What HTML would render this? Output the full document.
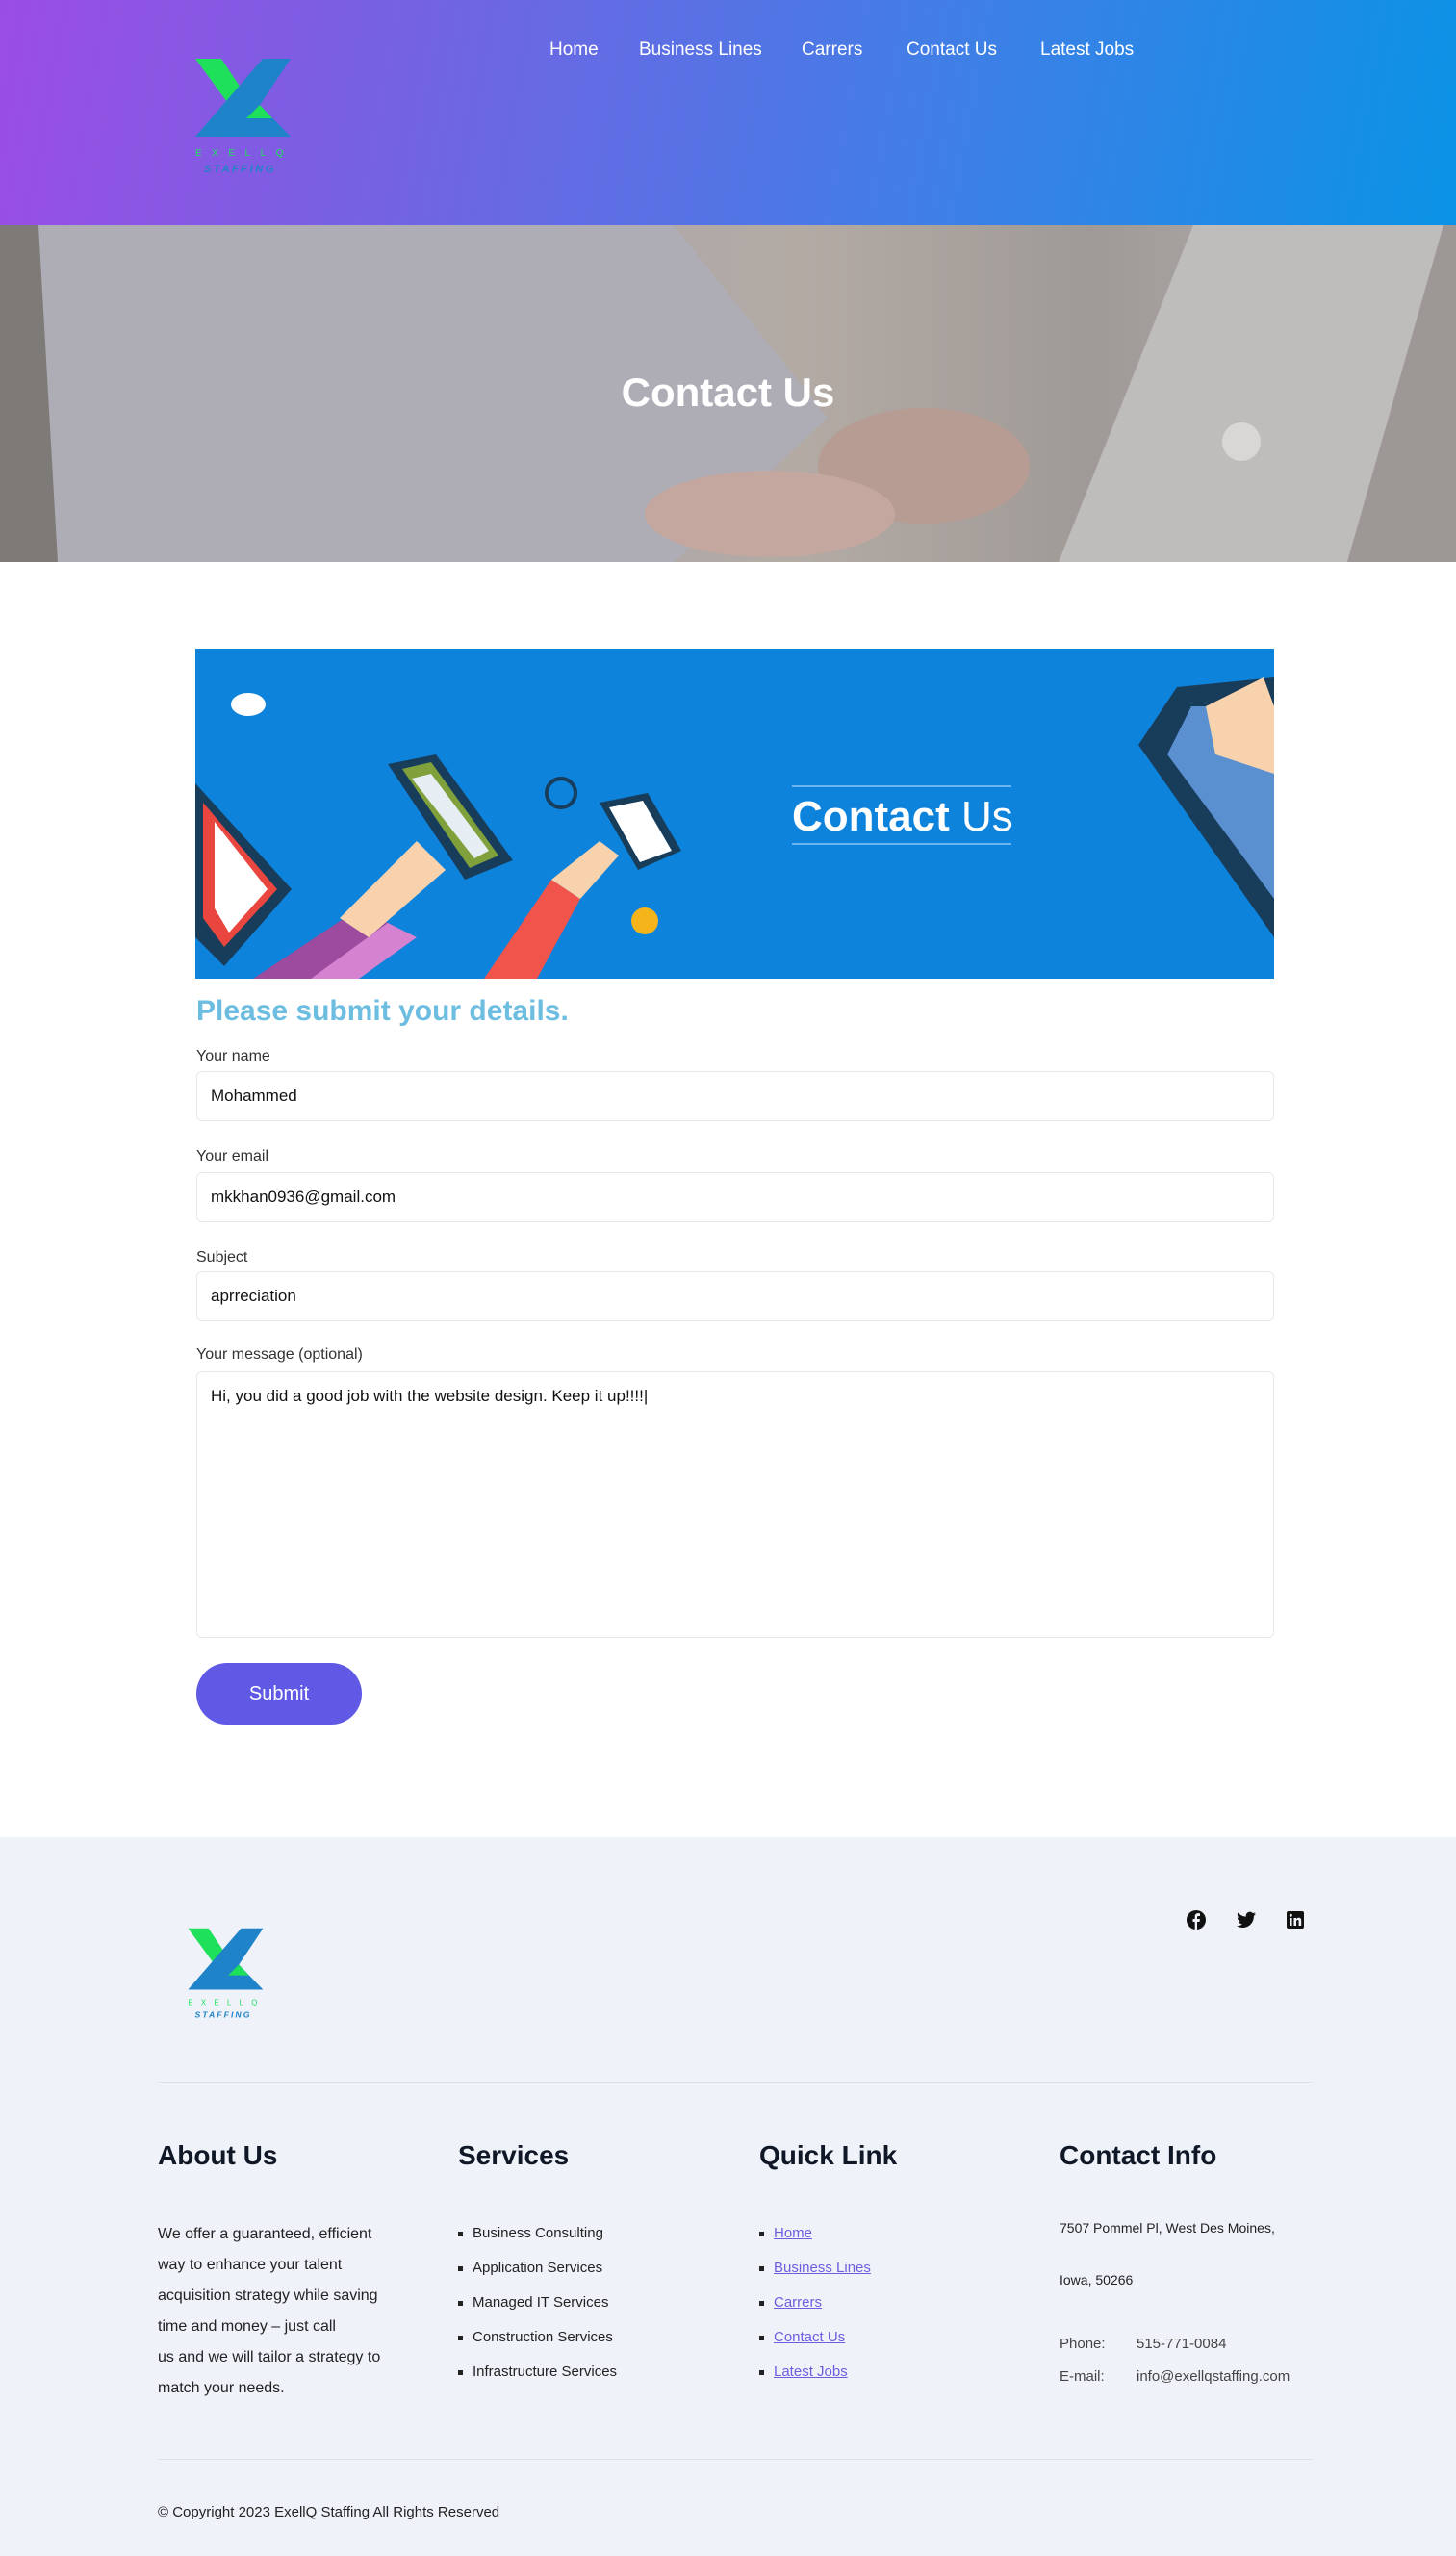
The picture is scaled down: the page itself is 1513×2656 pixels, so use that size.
<!DOCTYPE html>
<html><head><meta charset="utf-8"><style>
*{margin:0;padding:0;box-sizing:border-box}
body{width:1513px;height:2656px;font-family:"Liberation Sans",sans-serif;background:#fff;position:relative;overflow:hidden;color:#222}
.abs{position:absolute}
header{position:absolute;left:0;top:0;width:1513px;height:234px;background:linear-gradient(100deg,#9b4de3 0%,#6a68e3 35%,#3f7fe6 65%,#0a93e6 100%)}
nav a{position:absolute;top:41px;color:#fff;font-size:19px;text-decoration:none}
.hero{position:absolute;left:0;top:234px;width:1513px;height:350px;overflow:hidden;background:linear-gradient(90deg,#8f8d95 0%,#a9a6ad 30%,#b3aaa4 55%,#9f9a97 75%,#b8b3b4 100%)}
.hero h1{position:absolute;width:100%;top:150px;text-align:center;color:#fff;font-size:42px;font-weight:bold}
label{position:absolute;left:204px;font-size:16px;color:#333}
.in{position:absolute;left:204px;width:1120px;border:1px solid #e6e8ec;border-radius:6px;background:#fff;font-size:17px;color:#111;padding:0 14px}
footer{position:absolute;left:0;top:1909px;width:1513px;height:747px;background:#eff3f9}
.h{position:absolute;top:2224px;font-size:28px;font-weight:bold;color:#101828}
.ft{position:absolute;font-size:15px;color:#222}
ul.l{position:absolute;list-style:none;font-size:15px}
ul.l li{height:36px;line-height:22px;position:relative;padding-left:15px}
ul.l li:before{content:"";position:absolute;left:0;top:9px;width:5px;height:5px;background:#222}
ul.l a{color:#6b5fe0;text-decoration:underline}
hr{position:absolute;left:164px;width:1200px;border:0;border-top:1px solid #dde2ea}
</style></head><body>
<header>
<svg class="abs" style="left:200px;top:59px" width="104" height="124" viewBox="0 0 104 124">
<polygon points="3,2 30,2 58,44 44,58" fill="#1fe05a"/>
<polygon points="73,2 102,2 70,50 102,83 3,83" fill="#1f83c9"/>
<polygon points="56,64 70,50 83,64" fill="#1fe05a"/>
<text x="3" y="103" font-size="10" fill="#1fe05a" letter-spacing="10.5" font-family="Liberation Sans">EXELLQ</text>
<text x="12" y="120" font-size="11" fill="#1f83c9" letter-spacing="2.6" font-style="italic" font-weight="bold" font-family="Liberation Sans">STAFFING</text>
</svg>
<nav>
<a style="left:571px">Home</a><a style="left:664px">Business Lines</a><a style="left:833px">Carrers</a><a style="left:942px">Contact Us</a><a style="left:1081px">Latest Jobs</a>
</nav>
</header>
<div class="hero">
<svg class="abs" style="left:0;top:0" width="1513" height="350">
<polygon points="30,0 700,0 860,200 700,350 30,350" fill="#aeadb6"/>
<polygon points="0,0 40,0 60,350 0,350" fill="#7e7a78"/>
<polygon points="1240,0 1500,0 1400,350 1100,350" fill="#bfbcbc"/>
<polygon points="1500,0 1513,0 1513,350 1400,350" fill="#9d9896"/>
<ellipse cx="960" cy="250" rx="110" ry="60" fill="#b79c94"/>
<ellipse cx="800" cy="300" rx="130" ry="45" fill="#c4a89f"/>
<circle cx="1290" cy="225" r="20" fill="#d9d6d6"/>
</svg>
<h1>Contact Us</h1>
</div>
<svg class="abs" style="left:203px;top:674px" width="1121" height="343" viewBox="0 0 1121 343">
<rect width="1121" height="343" fill="#0d83dc"/>
<rect x="620" y="142" width="228" height="2" fill="#6cb4ee"/>
<rect x="620" y="202" width="228" height="2" fill="#6cb4ee"/>
<text x="620" y="189" font-size="44" fill="#fff" font-weight="bold" font-family="Liberation Sans">Contact <tspan font-weight="normal">Us</tspan></text>
<polygon points="0,140 100,250 30,330 0,300" fill="#173d5b"/>
<polygon points="8,160 85,250 30,310 8,280" fill="#e8463f"/>
<polygon points="20,180 75,250 35,295 20,270" fill="#fff"/>
<polygon points="200,120 250,110 330,220 280,240" fill="#173d5b"/>
<polygon points="215,125 245,118 315,215 285,228" fill="#7fa03b"/>
<polygon points="225,135 245,130 305,210 290,218" fill="#e7eef3"/>
<polygon points="60,343 170,270 210,290 120,343" fill="#9d4b9f"/>
<polygon points="120,343 200,285 230,300 170,343" fill="#d582d1"/>
<polygon points="150,280 230,200 260,230 180,300" fill="#f8d2ad"/>
<polygon points="420,160 470,150 505,210 460,230" fill="#173d5b"/>
<polygon points="430,165 465,158 495,210 462,222" fill="#fff"/>
<polygon points="300,343 370,240 400,260 355,343" fill="#f0544a"/>
<polygon points="370,240 420,200 440,215 400,260" fill="#f8d2ad"/>
<circle cx="467" cy="283" r="14" fill="#f4b41a"/>
<circle cx="380" cy="150" r="15" fill="none" stroke="#173d5b" stroke-width="4"/>
<ellipse cx="55" cy="58" rx="18" ry="12" fill="#fff"/>
<polygon points="1020,40 1121,30 1121,300 980,100" fill="#173d5b"/>
<polygon points="1035,60 1121,60 1121,260 1010,110" fill="#5a8fd0"/>
<polygon points="1050,60 1110,30 1121,60 1121,130 1060,110" fill="#f8d2ad"/>
</svg>
<div class="abs" style="left:204px;top:1034px;font-size:30px;font-weight:bold;color:#6cbde0">Please submit your details.</div>
<label style="top:1089px">Your name</label>
<div class="in" style="top:1113px;height:52px;line-height:50px">Mohammed</div>
<label style="top:1193px">Your email</label>
<div class="in" style="top:1218px;height:52px;line-height:50px">mkkhan0936@gmail.com</div>
<label style="top:1298px">Subject</label>
<div class="in" style="top:1321px;height:52px;line-height:50px">aprreciation</div>
<label style="top:1399px">Your message (optional)</label>
<div class="in" style="top:1425px;height:277px;padding-top:14px;line-height:22px">Hi, you did a good job with the website design. Keep it up!!!!|</div>
<div class="abs" style="left:204px;top:1728px;width:172px;height:64px;border-radius:32px;background:#6059e6;color:#fff;font-size:20px;text-align:center;line-height:64px">Submit</div>
<footer></footer>
<svg class="abs" style="left:193px;top:2002px" width="82" height="98" viewBox="0 0 104 124">
<polygon points="3,2 30,2 58,44 44,58" fill="#1fe05a"/>
<polygon points="73,2 102,2 70,50 102,83 3,83" fill="#1f83c9"/>
<polygon points="56,64 70,50 83,64" fill="#1fe05a"/>
<text x="3" y="103" font-size="10" fill="#1fe05a" letter-spacing="10.5" font-family="Liberation Sans">EXELLQ</text>
<text x="12" y="120" font-size="11" fill="#1f83c9" letter-spacing="2.6" font-style="italic" font-weight="bold" font-family="Liberation Sans">STAFFING</text>
</svg>
<svg class="abs" style="left:1233px;top:1985px" width="20" height="20" viewBox="0 0 20 20"><circle cx="10" cy="10" r="10" fill="#111"/><path d="M11 20V12h2.5l.4-3H11V7.3c0-.8.3-1.3 1.4-1.3H14V3.3C13.6 3.2 12.8 3.1 12 3.1c-2 0-3.3 1.2-3.3 3.4V9H6.5v3h2.2v8z" fill="#eff3f9"/></svg>
<svg class="abs" style="left:1285px;top:1986px" width="20" height="18" viewBox="0 0 24 20"><path d="M24 2.4c-.9.4-1.8.6-2.8.8 1-.6 1.8-1.6 2.200-2.7-1 .6-2 1-3.1 1.2C19.3.7 18 0 16.6 0c-2.7 0-4.9 2.2-4.9 4.9 0 .4 0 .8.1 1.1C7.7 5.8 4.1 3.9 1.7.9c-.4.7-.7 1.6-.7 2.5 0 1.7.9 3.2 2.2 4.1-.8 0-1.6-.2-2.2-.6v.1c0 2.4 1.7 4.4 3.9 4.8-.4.1-.8.2-1.3.2-.3 0-.6 0-.9-.1.6 2 2.4 3.4 4.6 3.4-1.7 1.3-3.8 2.1-6.1 2.1H0c2.2 1.4 4.8 2.2 7.5 2.2 9.1 0 14-7.5 14-14v-.6c1-.7 1.8-1.6 2.500-2.5z" fill="#111"/></svg>
<svg class="abs" style="left:1337px;top:1986px" width="18" height="18" viewBox="0 0 18 18"><rect width="18" height="18" rx="2" fill="#111"/><rect x="3" y="7" width="2.6" height="8" fill="#eff3f9"/><circle cx="4.3" cy="4.3" r="1.5" fill="#eff3f9"/><path d="M7.5 7h2.5v1.2c.5-.8 1.3-1.4 2.6-1.4 2 0 2.6 1.3 2.6 3.2V15h-2.6v-4.4c0-1-.3-1.6-1.2-1.600-1 0-1.4.7-1.4 1.7V15H7.5z" fill="#eff3f9"/></svg>
<hr style="top:2163px">
<div class="h" style="left:164px">About Us</div>
<div class="h" style="left:476px">Services</div>
<div class="h" style="left:789px">Quick Link</div>
<div class="h" style="left:1101px">Contact Info</div>
<div class="ft" style="left:164px;top:2306px;width:300px;line-height:32px;font-size:16px">We offer a guaranteed, efficient<br>way to enhance your talent<br>acquisition strategy while saving<br>time and money – just call<br>us and we will tailor a strategy to<br>match your needs.</div>
<ul class="l" style="left:476px;top:2310px"><li>Business Consulting</li><li>Application Services</li><li>Managed IT Services</li><li>Construction Services</li><li>Infrastructure Services</li></ul>
<ul class="l" style="left:789px;top:2310px"><li><a>Home</a></li><li><a>Business Lines</a></li><li><a>Carrers</a></li><li><a>Contact Us</a></li><li><a>Latest Jobs</a></li></ul>
<div class="ft" style="left:1101px;top:2307px;font-size:14px">7507 Pommel Pl, West Des Moines,</div>
<div class="ft" style="left:1101px;top:2361px;font-size:14px">Iowa, 50266</div>
<div class="ft" style="left:1101px;top:2427px;color:#444">Phone:</div><div class="ft" style="left:1181px;top:2427px;color:#444">515-771-0084</div>
<div class="ft" style="left:1101px;top:2461px;color:#444">E-mail:</div><div class="ft" style="left:1181px;top:2461px;color:#444">info@exellqstaffing.com</div>
<hr style="top:2555px">
<div class="ft" style="left:164px;top:2602px">© Copyright 2023 ExellQ Staffing All Rights Reserved</div>
</body></html>
